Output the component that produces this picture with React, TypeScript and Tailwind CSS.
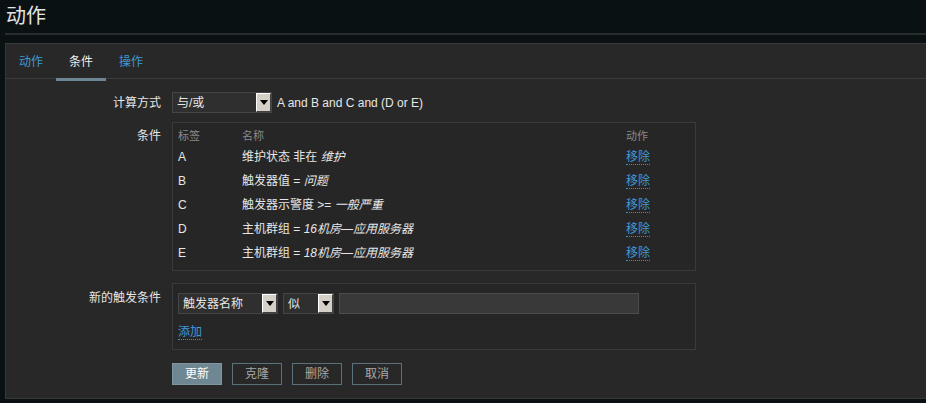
import React from "react";

const font = { fontFamily: '"Liberation Sans", "Noto Sans CJK SC", sans-serif' };

function Arrow() {
  return (
    <div className="flex h-full w-[15px] items-center justify-center border-t border-l border-t-white border-l-white border-r border-b border-r-[#404040] border-b-[#404040] bg-[#d4d0c8]">
      <svg width="8" height="5" viewBox="0 0 8 5">
        <path d="M0 0 H8 L4 5 Z" fill="#000" />
      </svg>
    </div>
  );
}

function Select({ value, w }: { value: string; w: string }) {
  return (
    <div className={`flex h-[21px] items-stretch border border-[#454545] bg-[#2f2f2f] ${w}`}>
      <div className="flex flex-1 items-center pl-[4px] text-[12px] text-[#e6e6e6]">{value}</div>
      <Arrow />
    </div>
  );
}

function Link({ children }: { children: React.ReactNode }) {
  return (
    <span className="border-b border-dotted border-[#3a8fc8] leading-[14px] text-[12px] text-[#3d9ad9]">
      {children}
    </span>
  );
}

const rows: { l: string; n: string; v: string }[] = [
  { l: "A", n: "维护状态 非在 ", v: "维护" },
  { l: "B", n: "触发器值 = ", v: "问题" },
  { l: "C", n: "触发器示警度 >= ", v: "一般严重" },
  { l: "D", n: "主机群组 = ", v: "16机房—应用服务器" },
  { l: "E", n: "主机群组 = ", v: "18机房—应用服务器" },
];

export default function App() {
  return (
    <div className="h-[403px] w-[926px] overflow-hidden bg-[#0a1112]" style={font}>
      <div className="h-[33px] pl-[6px] pt-[3px] text-[20px] leading-[26px] text-[#e4e4e4]">动作</div>
      <div className="ml-[5px] h-[2px] bg-[#2a2d2d]" />
      <div className="mt-[8px] ml-[5px] h-[356px] border-t border-l border-b border-[#383838] bg-[#282828]">
        <div className="flex h-[35px] items-stretch border-b border-[#3c3c3c] pt-[1px] text-[12px]">
          <div className="flex w-[50px] items-center justify-center text-[#3d9ad9]">动作</div>
          <div className="relative flex w-[50px] items-center justify-center text-[#f0f0f0]">
            条件
            <div className="absolute bottom-[-3px] left-0 h-[3px] w-[50px] bg-[#6c8793]" />
          </div>
          <div className="flex w-[50px] items-center justify-center text-[#3d9ad9]">操作</div>
        </div>

        <div className="pt-[13px] text-[12px] text-[#e6e6e6]">
          <div className="flex items-center">
            <div className="w-[155px] pr-0 text-right">计算方式</div>
            <div className="ml-[11px] flex items-center gap-[5px]">
              <Select value="与/或" w="w-[100px]" />
              <span className="text-[12px] text-[#e6e6e6]">A and B and C and (D or E)</span>
            </div>
          </div>

          <div className="mt-[9px] flex items-start">
            <div className="w-[155px] pt-[5px] text-right">条件</div>
            <div className="ml-[11px] h-[149px] w-[524px] border border-[#3a3a3a] bg-[#262626] px-[5px]">
              <div className="flex h-[22px] items-start pt-[6px] text-[11px] leading-[14px] text-[#8a8a8a]">
                <div className="w-[64px]">标签</div>
                <div className="w-[384px]">名称</div>
                <div>动作</div>
              </div>
              {rows.map((r) => (
                <div key={r.l} className="flex h-[24px] items-center">
                  <div className="w-[64px]">{r.l}</div>
                  <div className="w-[384px]">
                    {r.n}
                    <span className="italic">{r.v}</span>
                  </div>
                  <div>
                    <Link>移除</Link>
                  </div>
                </div>
              ))}
            </div>
          </div>

          <div className="mt-[12px] flex items-start">
            <div className="w-[155px] pt-[6px] text-right">新的触发条件</div>
            <div className="ml-[11px] h-[67px] w-[524px] border border-[#3a3a3a] bg-[#262626] px-[5px] pt-[9px]">
              <div className="flex items-center gap-[5px]">
                <Select value="触发器名称" w="w-[100px]" />
                <Select value="似" w="w-[51px]" />
                <div className="h-[21px] w-[300px] border border-[#4c4c4c] bg-[#393939]" />
              </div>
              <div className="mt-[9px]">
                <Link>添加</Link>
              </div>
            </div>
          </div>

          <div className="mt-[13px] ml-[166px] flex gap-[10px]">
            <div className="flex h-[22px] w-[50px] items-center justify-center border border-[#7e96a0] bg-[#6f8792] text-[12px] text-white">
              更新
            </div>
            {["克隆", "删除", "取消"].map((b) => (
              <div
                key={b}
                className="flex h-[22px] w-[50px] items-center justify-center border border-[#5a717b] text-[12px] text-[#a8a8a8]"
              >
                {b}
              </div>
            ))}
          </div>
        </div>
      </div>
    </div>
  );
}
